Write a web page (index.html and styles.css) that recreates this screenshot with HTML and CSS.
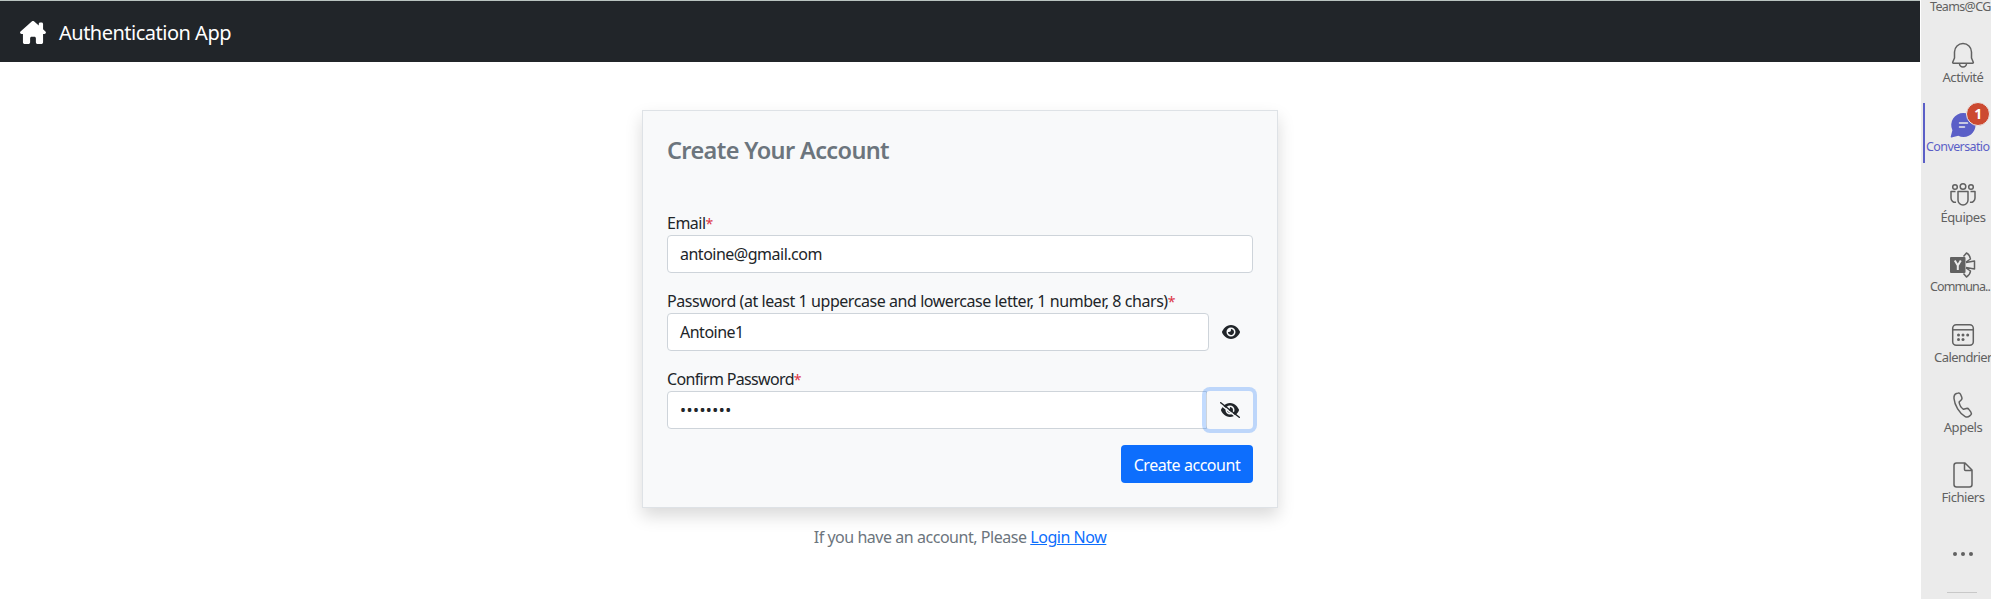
FILE: index.html
```html
<!DOCTYPE html>
<html lang="en">
<head>
<meta charset="utf-8">
<title>Authentication App</title>
<link rel="stylesheet" href="styles.css">
</head>
<body>
<div class="app">
  <nav class="navbar">
    <svg class="home" viewBox="0 0 576 512"><path d="M575.8 255.5c0 18-15 32.1-32 32.1h-32l.7 160.2c0 2.7-.2 5.4-.5 8.1V472c0 22.1-17.9 40-40 40H392c-22.1 0-40-17.900-40-40V384c0-17.700-14.300-32-32-32H256c-17.700 0-32 14.300-32 32v88c0 22.100-17.900 40-40 40H104c-22.100 0-40-17.900-40-40V287.600H32c-18 0-32-14-32-32.100c0-9 3-17 10-24L266.400 8c7-7 15-8 22-8s15 2 21 7L416 100.700V64c0-17.700 14.300-32 32-32h32c17.700 0 32 14.300 32 32V185l52.800 46.400c8 7 12 15 11 24z"/></svg>
    <span class="brand">Authentication App</span>
  </nav>
  <main class="main">
    <form class="card">
      <h4 class="title">Create Your Account</h4>
      <div class="field">
        <label class="label">Email<span class="req">*</span></label>
        <div class="input">antoine@gmail.com</div>
      </div>
      <div class="field">
        <label class="label label-long">Password (at least 1 uppercase and lowercase letter, 1 number, 8 chars)<span class="req">*</span></label>
        <div class="group">
          <div class="input">Antoine1</div>
          <button type="button" class="toggle"><svg class="eye" viewBox="0 0 576 512"><path d="M288 32c-80.8 0-145.500 36.800-192.600 80.600C48.600 156 17.300 208 2.500 243.700c-3.300 7.900-3.300 16.700 0 24.600C17.300 304 48.600 356 95.400 399.400C142.500 443.200 207.200 480 288 480s145.500-36.800 192.600-80.600c46.800-43.500 78.100-95.400 93-131.100c3.300-7.900 3.300-16.700 0-24.600c-14.900-35.700-46.200-87.700-93-131.100C433.500 68.800 368.800 32 288 32zM144 256a144 144 0 1 1 288 0 144 144 0 1 1-288 0zm144-64c0 35.300-28.700 64-64 64c-7.100 0-13.900-1.200-20.300-3.300c-5.500-1.800-11.900 1.600-11.700 7.400c.3 6.900 1.300 13.800 3.200 20.700c13.700 51.200 66.400 81.600 117.600 67.900s81.600-66.400 67.900-117.600c-11.100-41.500-47.800-69.400-88.600-71.100c-5.800-.2-9.200 6.100-7.400 11.700c2.100 6.400 3.300 13.200 3.300 20.300z"/></svg></button>
        </div>
      </div>
      <div class="field">
        <label class="label label-confirm">Confirm Password<span class="req">*</span></label>
        <div class="group">
          <div class="input input-joined"><span class="dots">••••••••</span></div>
          <button type="button" class="toggle toggle-focus"><svg class="eye-slash" viewBox="0 0 640 512"><path transform="translate(32 0)" d="M288 32c-80.800 0-145.500 36.800-192.600 80.600C48.600 156 17.300 208 2.500 243.700c-3.300 7.900-3.300 16.700 0 24.600C17.300 304 48.600 356 95.400 399.400C142.500 443.200 207.200 480 288 480s145.500-36.800 192.600-80.600c46.800-43.500 78.100-95.400 93-131.100c3.300-7.900 3.300-16.700 0-24.600c-14.900-35.700-46.200-87.700-93-131.100C433.500 68.800 368.800 32 288 32zM144 256a144 144 0 1 1 288 0 144 144 0 1 1-288 0zm144-64c0 35.300-28.700 64-64 64c-7.100 0-13.900-1.200-20.300-3.300c-5.500-1.800-11.900 1.600-11.700 7.400c.3 6.900 1.300 13.800 3.200 20.700c13.700 51.200 66.400 81.600 117.600 67.900s81.600-66.400 67.900-117.600c-11.100-41.500-47.800-69.400-88.600-71.100c-5.800-.2-9.200 6.100-7.400 11.700c2.100 6.400 3.300 13.200 3.300 20.300z"/><path class="slash-gap" d="M-16 56L576 520"/><path class="slash" d="M24 24L616 488"/></svg></button>
        </div>
      </div>
      <div class="actions"><button type="button" class="submit">Create account</button></div>
    </form>
    <p class="hint">If you have an account, Please <a class="link" href="#">Login Now</a></p>
  </main>
</div>
<aside class="rail">
  <div class="rail-head">Teams@CG</div>
  <div class="item">
    <svg class="icon" viewBox="0 0 26 26"><path d="M13 1.500a8.500 8.500 0 0 0-8.500 8.500v6L2.700 20.200c-.2.600.1 1 .7 1h19.200c.6 0 .9-.4.7-1L21.500 16v-6A8.500 8.500 0 0 0 13 1.500zM9.500 21.500a3.500 3.500 0 0 0 7 0"/></svg>
    <span class="name">Activité</span>
  </div>
  <div class="item item-active">
    <svg class="icon icon-chat" viewBox="0 0 26 26"><path class="solid" d="M13.500 1a12 12 0 1 1-5.200 22.800L1.500 25.500c-.6.1-.9-.3-.8-.8l1.700-6.500A12 12 0 0 1 13.500 1z"/><path class="lines" d="M9.500 11h8M9.500 15h5"/></svg>
    <span class="badge">1</span>
    <span class="name name-chat">Conversatio</span>
  </div>
  <div class="item">
    <svg class="icon" viewBox="0 0 26 26"><circle cx="5" cy="5" r="2.300"/><circle cx="13" cy="4.500" r="2.800"/><circle cx="21" cy="5" r="2.300"/><path d="M8 9.500h10v8.500a5 5 0 0 1-10 0zM5.500 9.500H1V16a4.300 4.300 0 0 0 5 4.300M20.500 9.500H25V16a4.300 4.300 0 0 1-5 4.300"/></svg>
    <span class="name">Équipes</span>
  </div>
  <div class="item">
    <svg class="icon" viewBox="0 0 26 26"><path d="M13.500 4.500L16.500 1Q20 3 20.500 7L16 10M13.500 21.500L16.500 25Q20 23 20.500 19L16 16M16 10.500L24.500 9V17L16 15.500"/><rect class="solid" x="0" y="5" width="15.500" height="16" rx="1"/><path class="letter" d="M4.800 8.500l3 5 3-5M7.800 13v5"/></svg>
    <span class="name name-clipped">Communa..</span>
  </div>
  <div class="item">
    <svg class="icon" viewBox="0 0 26 26"><rect x="2.700" y="2.700" width="20.600" height="20.600" rx="3.500"/><path d="M2.700 7.800h20.600"/><g class="solid"><circle cx="8.500" cy="13" r="1.500"/><circle cx="13" cy="13" r="1.500"/><circle cx="17.700" cy="13" r="1.500"/><circle cx="8.500" cy="17.500" r="1.500"/><circle cx="13" cy="17.500" r="1.500"/></g></svg>
    <span class="name name-calendar">Calendrier</span>
  </div>
  <div class="item">
    <svg class="icon" viewBox="0 0 26 26"><path d="M6.500 1.500l1.300-.4c1.200-.4 2.200.1 2.700 1.200l1.300 3c.4 1 .2 2-.6 2.700L9.100 10c.3 2.400 2.400 6 4.400 7.300l2.800-.8c1-.3 2 0 2.600.9l2 2.700c.7 1 .6 2.100-.2 2.900l-1 .9c-1.300 1.200-3 1.500-4.500.7C9.500 21.500 4.500 13 4 6.500c-.2-2.300.600-4.300 2.500-5z"/></svg>
    <span class="name">Appels</span>
  </div>
  <div class="item">
    <svg class="icon" viewBox="0 0 26 26"><path d="M6.500 1H15l7 7v14.500a2.500 2.500 0 0 1-2.500 2.500h-13A2.500 2.500 0 0 1 4 22.500v-19A2.500 2.500 0 0 1 6.500 1zM14.500 1v6.500a1 1 0 0 0 1 1H22"/></svg>
    <span class="name">Fichiers</span>
  </div>
  <svg class="more" viewBox="0 0 20 4"><circle cx="2" cy="2" r="2"/><circle cx="10" cy="2" r="2"/><circle cx="18" cy="2" r="2"/></svg>
  <div class="rule"></div>
</aside>
</body>
</html>
```

FILE: styles.css
```css
* { box-sizing: border-box; }
body {
  margin: 0;
  height: 599px;
  display: flex;
  overflow: hidden;
  background: #fff;
  color: #212529;
  font: 16px/24px "Noto Sans", "Open Sans", sans-serif;
}
.app { width: 1920px; margin-right: 1px; flex: none; }
.navbar {
  display: flex;
  align-items: center;
  height: 62px;
  padding: 3px 20px 0;
  gap: 13px;
  background: #212529;
  border-top: 1px solid #b9c4c0;
  color: #fff;
}
.home { width: 26px; height: 23px; margin-top: -2px; fill: #fff; }
.brand { font-size: 20px; line-height: 30px; letter-spacing: -0.5px; }
.main { display: flex; flex-direction: column; align-items: center; padding-top: 48px; }
.card {
  width: 636px;
  height: 398px;
  padding: 24px;
  background: #f8f9fa;
  border: 1px solid #dee2e6;
  box-shadow: 0 8px 16px rgba(0, 0, 0, .15);
}
.title {
  margin: 0 0 47px;
  height: 29px;
  font-size: 23.500px;
  line-height: 31px;
  font-weight: 600;
  letter-spacing: -0.62px;
  color: #6c757d;
}
.field { margin-bottom: 16px; }
.label { display: block; height: 24px; line-height: 25px; white-space: nowrap; letter-spacing: -0.5px; }
.label-long { letter-spacing: -0.44px; }
.label-confirm { letter-spacing: -0.66px; }
.req { color: #dc3545; font-size: 14px; }
.input {
  flex: 1;
  height: 38px;
  padding: 6px 12px;
  line-height: 25px;
  background: #fff;
  border: 1px solid #ced4da;
  border-radius: 4px;
  letter-spacing: -0.5px;
}
.group { display: flex; }
.input-joined { border-top-right-radius: 0; border-bottom-right-radius: 0; }
.dots { letter-spacing: 0.45px; }
.toggle {
  display: flex;
  align-items: center;
  justify-content: center;
  width: 44px;
  height: 38px;
  padding: 0;
  border: 0;
  border-radius: 4px;
  background: transparent;
}
.toggle-focus { width: 47px; margin-left: -1px; box-shadow: 0 0 0 4px rgba(13, 110, 253, .25); }
.eye { width: 18px; height: 16px; fill: #212529; }
.eye-slash { width: 20px; height: 16px; fill: #212529; }
.slash { stroke: #212529; stroke-width: 48; stroke-linecap: round; }
.slash-gap { stroke: #f8f9fa; stroke-width: 50; }
.actions { display: flex; justify-content: flex-end; }
.submit {
  width: 132px;
  height: 38px;
  padding: 1px 0 0;
  border: 0;
  border-radius: 4px;
  background: #0d6efd;
  color: #fff;
  font: inherit;
  letter-spacing: -0.45px;
}
.hint { margin: 17px 0 0; color: #6c757d; letter-spacing: -0.46px; }
.link { color: #0d6efd; }
.rail {
  display: flex;
  flex-direction: column;
  flex: none;
  width: 70px;
  margin-right: -14px;
  height: 599px;
  background: #ebebeb;
  color: #616161;
  font-size: 13px;
  line-height: 16px;
  letter-spacing: -0.45px;
}
.rail { width: 84px; margin-right: 0; }
.rail-head { height: 34px; padding-left: 9px; font-size: 12.500px; line-height: 13px; letter-spacing: -0.65px; }
.item {
  position: relative;
  display: flex;
  flex-direction: column;
  align-items: center;
  height: 70px;
  padding-top: 8px;
}
.icon { width: 26px; height: 26px; overflow: visible; fill: none; stroke: #616161; stroke-width: 1.500; stroke-linejoin: round; }
.solid { fill: #616161; stroke: none; }
.letter { stroke: #ebebeb; stroke-width: 2; }
.name { margin-top: 1px; white-space: nowrap; }
.name-chat { align-self: flex-start; padding-left: 5px; font-size: 12.500px; letter-spacing: -0.6px; }
.name-clipped { align-self: flex-start; padding-left: 9px; font-size: 12.500px; letter-spacing: -0.9px; }
.name-calendar { letter-spacing: -0.58px; }
.item-active { color: #5b5fc7; }
.item-active::before { content: ""; position: absolute; left: 2px; top: -1px; width: 2px; height: 60px; background: #5b5fc7; }
.icon-chat .solid { fill: #5b5fc7; }
.icon-chat .lines { stroke: #ebebeb; stroke-linecap: round; }
.badge {
  position: absolute;
  left: 45px;
  top: -2px;
  width: 24px;
  height: 24px;
  border: 1.500px solid #ebebeb;
  border-radius: 50%;
  background: #cc4a31;
  color: #fff;
  font-size: 14px;
  font-weight: 700;
  line-height: 21px;
  text-align: center;
}
.more { width: 20px; height: 4px; margin: 28px 0 0 32px; fill: #616161; }
.rule { width: 30px; height: 1px; margin: 36px 0 0 26px; background: #c8c8c8; }
```
